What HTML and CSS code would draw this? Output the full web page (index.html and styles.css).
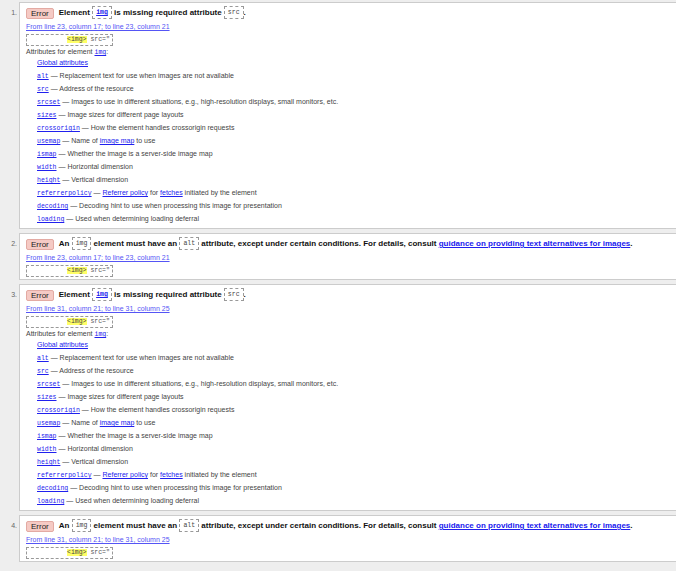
FILE: index.html
```html
<!DOCTYPE html>
<html>
<head>
<meta charset="utf-8">
<link rel="stylesheet" href="styles.css">
</head>
<body>
<ol class="results">
  <li class="item">
    <span class="num">1.</span>
    <div class="card">
      <p class="msg"><strong class="badge">Error</strong> <span class="text">Element <code class="c"><a href="#">img</a></code> is missing required attribute <code class="c">src</code>.</span></p>
      <p class="loc"><a href="#">From line 23, column 17; to line 23, column 21</a></p>
      <div class="extract-row"><code class="extract"><b class="hl">&lt;img&gt;</b> src="</code></div>
      <p class="attrs-head">Attributes for element <code class="ic"><a href="#">img</a></code>:</p>
      <ul class="attrs">
        <li><a href="#">Global attributes</a></li>
        <li><code class="ic"><a href="#">alt</a></code> — Replacement text for use when images are not available</li>
        <li><code class="ic"><a href="#">src</a></code> — Address of the resource</li>
        <li><code class="ic"><a href="#">srcset</a></code> — Images to use in different situations, e.g., high-resolution displays, small monitors, etc.</li>
        <li><code class="ic"><a href="#">sizes</a></code> — Image sizes for different page layouts</li>
        <li><code class="ic"><a href="#">crossorigin</a></code> — How the element handles crossorigin requests</li>
        <li><code class="ic"><a href="#">usemap</a></code> — Name of <a href="#">image map</a> to use</li>
        <li><code class="ic"><a href="#">ismap</a></code> — Whether the image is a server-side image map</li>
        <li><code class="ic"><a href="#">width</a></code> — Horizontal dimension</li>
        <li><code class="ic"><a href="#">height</a></code> — Vertical dimension</li>
        <li><code class="ic"><a href="#">referrerpolicy</a></code> — <a href="#">Referrer policy</a> for <a href="#">fetches</a> initiated by the element</li>
        <li><code class="ic"><a href="#">decoding</a></code> — Decoding hint to use when processing this image for presentation</li>
        <li><code class="ic"><a href="#">loading</a></code> — Used when determining loading deferral</li>
      </ul>
    </div>
  </li>
  <li class="item">
    <span class="num">2.</span>
    <div class="card">
      <p class="msg"><strong class="badge">Error</strong> <span class="text">An <code class="c">img</code> element must have an <code class="c">alt</code> attribute, except under certain conditions. For details, consult <a href="#">guidance on providing text alternatives for images</a>.</span></p>
      <p class="loc"><a href="#">From line 23, column 17; to line 23, column 21</a></p>
      <div class="extract-row"><code class="extract"><b class="hl">&lt;img&gt;</b> src="</code></div>
    </div>
  </li>
  <li class="item">
    <span class="num">3.</span>
    <div class="card">
      <p class="msg"><strong class="badge">Error</strong> <span class="text">Element <code class="c"><a href="#">img</a></code> is missing required attribute <code class="c">src</code>.</span></p>
      <p class="loc"><a href="#">From line 31, column 21; to line 31, column 25</a></p>
      <div class="extract-row"><code class="extract"><b class="hl">&lt;img&gt;</b> src="</code></div>
      <p class="attrs-head">Attributes for element <code class="ic"><a href="#">img</a></code>:</p>
      <ul class="attrs">
        <li><a href="#">Global attributes</a></li>
        <li><code class="ic"><a href="#">alt</a></code> — Replacement text for use when images are not available</li>
        <li><code class="ic"><a href="#">src</a></code> — Address of the resource</li>
        <li><code class="ic"><a href="#">srcset</a></code> — Images to use in different situations, e.g., high-resolution displays, small monitors, etc.</li>
        <li><code class="ic"><a href="#">sizes</a></code> — Image sizes for different page layouts</li>
        <li><code class="ic"><a href="#">crossorigin</a></code> — How the element handles crossorigin requests</li>
        <li><code class="ic"><a href="#">usemap</a></code> — Name of <a href="#">image map</a> to use</li>
        <li><code class="ic"><a href="#">ismap</a></code> — Whether the image is a server-side image map</li>
        <li><code class="ic"><a href="#">width</a></code> — Horizontal dimension</li>
        <li><code class="ic"><a href="#">height</a></code> — Vertical dimension</li>
        <li><code class="ic"><a href="#">referrerpolicy</a></code> — <a href="#">Referrer policy</a> for <a href="#">fetches</a> initiated by the element</li>
        <li><code class="ic"><a href="#">decoding</a></code> — Decoding hint to use when processing this image for presentation</li>
        <li><code class="ic"><a href="#">loading</a></code> — Used when determining loading deferral</li>
      </ul>
    </div>
  </li>
  <li class="item">
    <span class="num">4.</span>
    <div class="card">
      <p class="msg"><strong class="badge">Error</strong> <span class="text">An <code class="c">img</code> element must have an <code class="c">alt</code> attribute, except under certain conditions. For details, consult <a href="#">guidance on providing text alternatives for images</a>.</span></p>
      <p class="loc"><a href="#">From line 31, column 21; to line 31, column 25</a></p>
      <div class="extract-row"><code class="extract"><b class="hl">&lt;img&gt;</b> src="</code></div>
    </div>
  </li>
</ol>
</body>
</html>
```

FILE: styles.css
```css
html, body {
  margin: 0;
  padding: 0;
  background: #eeeeee;
  font-family: "Liberation Sans", Arial, sans-serif;
  color: #333;
}

a {
  color: #2020ee;
  text-decoration: underline;
}

.results {
  list-style: none;
  margin: 2px 0 0;
  padding: 0;
}

.item {
  display: flex;
  align-items: flex-start;
  margin-bottom: 4px;
}

.num {
  width: 17px;
  flex: none;
  text-align: right;
  padding-right: 2px;
  padding-top: 4px;
  font-size: 7px;
  line-height: 14px;
  color: #666;
}

.card {
  flex: 1;
  background: #fff;
  border: 1px solid #cccccc;
  border-right: none;
  padding: 3px 0 2px 6px;
  min-width: 0;
}

.msg {
  margin: 0;
  height: 14px;
  line-height: 14px;
  font-size: 8px;
  white-space: nowrap;
  display: flex;
  align-items: center;
}

.badge {
  display: inline-block;
  font-weight: normal;
  font-size: 8px;
  line-height: 9px;
  color: #222;
  background: #f5cac4;
  border: 1px solid #e3aaa3;
  border-radius: 2px;
  padding: 0 4px;
  margin-right: 5px;
}

.text {
  font-weight: bold;
  color: #111;
}

.text a {
  font-weight: bold;
}

.c {
  display: inline-block;
  font-family: "Liberation Mono", "Courier New", monospace;
  font-weight: normal;
  font-size: 6.5px;
  line-height: 11px;
  padding: 0 3px;
  border: 1px dashed #999;
  color: #444;
  vertical-align: middle;
}

.loc {
  margin: 0;
  height: 13px;
  font-size: 7px;
  line-height: 13px;
}

.loc a {
  color: #5555f5;
}

.extract-row {
  margin: 1px 0 0;
  height: 12px;
  display: flex;
  align-items: flex-start;
}

.extract {
  display: block;
  font-family: "Liberation Mono", "Courier New", monospace;
  font-size: 6.5px;
  line-height: 10px;
  border: 1px dashed #999;
  padding: 0 2px 0 40px;
  color: #555;
  white-space: pre;
}

.hl {
  font-weight: normal;
  background: #ffff66;
  color: #444;
}

.attrs-head {
  margin: 1px 0 0;
  height: 9px;
  font-size: 7px;
  line-height: 9px;
  color: #444;
}

.ic {
  font-family: "Liberation Mono", "Courier New", monospace;
  font-size: 6.5px;
  line-height: 1;
}

.attrs {
  list-style: none;
  margin: 0 0 1px;
  padding: 0 0 0 11px;
}

.attrs li {
  height: 13px;
  font-size: 7px;
  line-height: 13px;
  color: #444;
  white-space: nowrap;
}
```
